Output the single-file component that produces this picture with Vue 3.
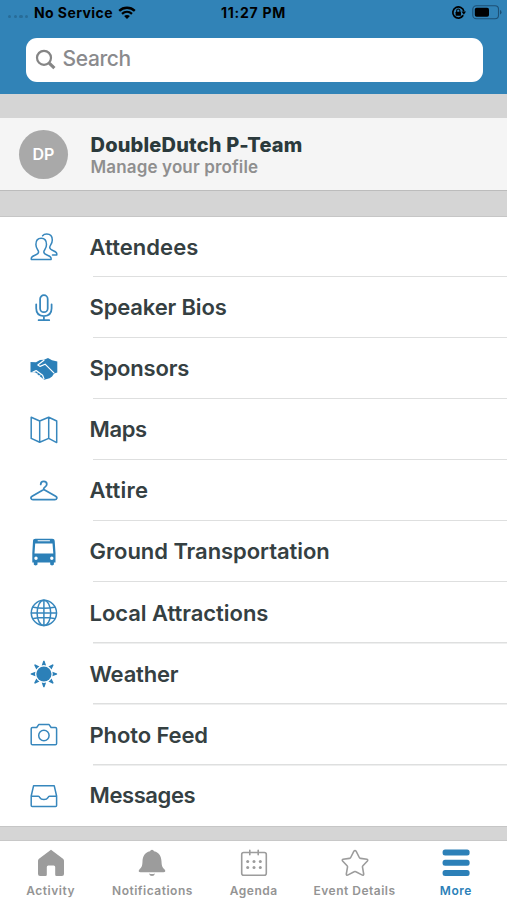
<script setup>
const items = [
  { id: 'attendees', label: 'Attendees', spacing: '0.05px' },
  { id: 'speakers', label: 'Speaker Bios', spacing: '-0.15px' },
  { id: 'sponsors', label: 'Sponsors', spacing: '-0.2px' },
  { id: 'maps', label: 'Maps', spacing: '-0.35px' },
  { id: 'attire', label: 'Attire', spacing: '0.25px' },
  { id: 'transport', label: 'Ground Transportation', spacing: '-0.06px' },
  { id: 'local', label: 'Local Attractions', spacing: '-0.04px' },
  { id: 'weather', label: 'Weather', spacing: '-0.2px' },
  { id: 'photo', label: 'Photo Feed', spacing: '-0.1px' },
  { id: 'messages', label: 'Messages', spacing: '-0.4px' }
]
const tabs = [
  { id: 'home', label: 'Activity' },
  { id: 'bell', label: 'Notifications' },
  { id: 'agenda', label: 'Agenda' },
  { id: 'star', label: 'Event Details' },
  { id: 'more', label: 'More', active: true }
]
const rays = [0, 45, 90, 135, 180, 225, 270, 315]
</script>

<template>
  <div class="screen">
    <header class="top">
      <div class="status">
        <div class="carrier">
          <span class="signal"><i v-for="n in 4" :key="n"></i></span>
          <span class="service">No Service</span>
          <svg class="wifi" viewBox="0 0 18 13">
            <path d="M1.2 4.8C5.6.7 12.4.7 16.8 4.8" fill="none" stroke="#000" stroke-width="2.4" />
            <path d="M4 7.8C7 5.2 11 5.2 14 7.8" fill="none" stroke="#000" stroke-width="2.3" />
            <path d="M6.1 10C7.6 8.5 10.4 8.5 11.9 10L9 13Z" />
          </svg>
        </div>
        <span class="time">11:27 PM</span>
        <div class="power">
          <svg class="lock" viewBox="0 0 14 14">
            <path d="M11.4 9.600A5.200 5.200 0 1 1 12 6" fill="none" stroke="#000" stroke-width="1.600" />
            <path d="M9.800 6H14L12 9Z" />
            <rect x="4.300" y="6.200" width="5" height="3.800" rx=".5" />
            <path d="M5.300 6.500V5.300a1.500 1.500 0 0 1 3 0v1.200" fill="none" stroke="#000" />
          </svg>
          <svg class="battery" viewBox="0 0 30 15">
            <rect x=".8" y=".8" width="25.700" height="12.900" rx="3.500" fill="none" stroke="#1d5075" stroke-width="1.100" />
            <rect x="2.800" y="2.800" width="14.200" height="9" rx="1.800" />
            <path d="M28 5v4.500q1.500-.5 1.500-2.200T28 5" fill="#1d5075" />
          </svg>
        </div>
      </div>
      <div class="search">
        <svg viewBox="0 0 22 22" fill="none" stroke="#858585">
          <circle cx="9" cy="8.800" r="7" stroke-width="2.200" />
          <path d="M14.200 14.100l5.200 5" stroke-width="3.200" />
        </svg>
        <span>Search</span>
      </div>
    </header>

    <section class="profile">
      <div class="avatar">DP</div>
      <div class="who">
        <div class="name">DoubleDutch P-Team</div>
        <div class="manage">Manage your profile</div>
      </div>
    </section>

    <ul class="menu">
      <li v-for="item in items" :key="item.id">
        <svg class="icon" viewBox="0 0 28 28">
          <g v-if="item.id === 'attendees'" class="line">
            <path d="M1.300 26.500v-1.200c0-3.500 7.300-2.700 7.300-6.300 0-2-2.700-3-2.700-7.400 0-4.200 2.100-6.300 5.300-6.300s5.300 2.100 5.300 6.300c0 4.400-2.700 5.400-2.700 7.400 0 3.600 7.300 2.800 7.300 6.300v1.200z" />
            <path d="M12.600 2.800c.9-1.100 2.400-1.700 4.100-1.700 3.400 0 5.600 2.100 5.600 5.900 0 4.100-2.600 5.200-2.600 7.500 0 3.500 7.100 2.900 7.100 6.200V22h-4.300" />
          </g>
          <g v-else-if="item.id === 'speakers'" class="line thick">
            <rect x="10.100" y="1.200" width="7.600" height="17" rx="3.800" />
            <path d="M6.200 10.300v4c0 5 3 7.700 7.700 7.700s7.700-2.700 7.700-7.700v-4M13.900 22v4.200M8.600 26.200h10.600" />
          </g>
          <g v-else-if="item.id === 'sponsors'">
            <path d="M.5 7.100 6 7.200 10 5l4-.2L18 3l4 2.200 5.300 1.300v11l-3.200.9-2 3-2.500 1.800-5.500 1.600-2-1.700-2-1.500-5-4.300H.5z" />
            <path class="gap" d="M14.300 5.100 7.800 10l2.300 1.400 5-2.200 9 9M2.500 17.300l3.600-1.700 6.500 4.600 1.500 4" />
            <path class="gap fine" d="M5.400 20l2.400-2.400M8.200 22.200l2.400-2.600" />
          </g>
          <g v-else-if="item.id === 'maps'" class="line">
            <path d="M1.200 1.200 9.700 5l9-3.800L26.700 5v21.600l-8-4.200-9 3.900-8.500-3.900zM9.700 5v21.300M18.700 1.200v21.200" />
          </g>
          <g v-else-if="item.id === 'attire'" class="line thick">
            <path d="M10.700 7.400c0-2 1.200-3 3-3 2.100 0 3.100 1.300 3.100 2.900 0 2.800-3.300 2.300-3.300 5.100M13.800 12.500l11.900 6.700c1.900 1.100 1.300 3.500-.9 3.500H3c-2.200 0-2.800-2.400-.9-3.500z" />
          </g>
          <g v-else-if="item.id === 'transport'">
            <path fill-rule="evenodd" d="M5.500.8h16.700c1.700 0 2.300.8 2.500 2.200L25.500 15v9.500h-1.600v1.800c0 1.500-3.700 1.500-3.700 0v-1.800H7.500v1.800c0 1.500-3.700 1.500-3.700 0v-1.800H2.300V15L3 3C3.100 1.600 3.800.8 5.500.8ZM7.700 2.300v1h12.200v-1ZM5.200 5.600 4.500 15.500h18.800L22.500 5.600ZM6 18.500a1.700 1.700 0 1 0 0 3.400 1.700 1.700 0 0 0 0-3.400m15.800 0a1.700 1.700 0 1 0 0 3.400 1.700 1.700 0 0 0 0-3.400" />
          </g>
          <g v-else-if="item.id === 'local'" class="line">
            <circle cx="13.900" cy="13.900" r="12.600" />
            <ellipse cx="13.900" cy="13.900" rx="6.800" ry="12.600" />
            <path d="M13.900 1.300v25.200M1.300 13.900h25.200M3.400 8.300q10.500 2 21 0M3.400 19.500q10.500-2 21 0" />
          </g>
          <g v-else-if="item.id === 'weather'">
            <circle cx="13.900" cy="14" r="7.600" />
            <path v-for="r in rays" :key="r" d="M11.700 5.500 13.300.8h1.200l1.600 4.700-2.200-.4z" :transform="`rotate(${r} 13.900 14)`" />
          </g>
          <g v-else-if="item.id === 'photo'" class="line">
            <path d="M2.500 6.500h4.200l2-2.900h10.400l2 2.900h4.200q1.300 0 1.300 1.300v14.700q0 1.300-1.300 1.300H2.500q-1.300 0-1.300-1.300V7.800q0-1.300 1.300-1.300z" />
            <circle cx="13.900" cy="14.500" r="5.200" />
          </g>
          <g v-else class="line">
            <path d="M1.200 14 3.600 3.700h20.600L26.600 14v9.500q0 1-1 1H2.200q-1 0-1-1zM1.200 14.300h7.100q1.100 0 1.500 1.300 1.100 2 4.100 2t4.100-2q.4-1.300 1.500-1.300h7.100" />
          </g>
        </svg>
        <span class="label" :style="{ letterSpacing: item.spacing }">{{ item.label }}</span>
      </li>
    </ul>

    <nav class="tabs">
      <div v-for="tab in tabs" :key="tab.id" :class="['tab', tab.id, { active: tab.active }]">
        <svg viewBox="0 0 28 28">
          <path v-if="tab.id === 'home'" d="M14 .8 26 9.800q1 .8 1 2V25q0 2-2 2h-5.500q-1.300 0-1.300-1.300V18q0-1.500-1.500-1.500h-5.400q-1.500 0-1.500 1.500v7.700q0 1.300-1.300 1.300H3q-2 0-2-2V11.800q0-1.200 1-2z" />
          <g v-else-if="tab.id === 'bell'">
            <path d="M14 .7q1.500 0 2 1.600c5.500 1.300 7.300 5.500 7.500 10.200.2 5.500 1.200 6 3.100 8 1.300 1.500.7 2.700-1.100 2.700h-23c-1.800 0-2.400-1.200-1.100-2.700 1.900-2 2.900-2.500 3.100-8C4.700 7.800 6.500 3.600 12 2.300q.5-1.600 2-1.600z" />
            <path d="M11 24.500q3 1 6 0-.6 2.500-3 2.500t-3-2.500" />
          </g>
          <g v-else-if="tab.id === 'agenda'">
            <path class="outline" d="M3.700 3.500h20.600q2 0 2 2v18.700q0 2-2 2H3.700q-2 0-2-2V5.500q0-2 2-2zM9.800 1.200v4.500M18.200 1.200v4.500" />
            <g v-for="y in [12.400, 18.400]" :key="y">
              <circle v-for="x in [7.700, 14, 20.300]" :key="x" :cx="x" :cy="y" r="1.500" />
            </g>
          </g>
          <path v-else-if="tab.id === 'star'" class="outline" d="M12.900 2.200q1.100-1.500 2.200 0l3.200 6.300q.4.800 1.300.9l6.300.9q1.400.5.500 1.700l-4.500 4.700q-.6.600-.4 1.500l1.200 6.800q0 1.500-1.400 1.100l-6.400-3.300q-.9-.5-1.800 0l-6.400 3.300q-1.400.4-1.400-1.100l1.200-6.800q.2-.9-.4-1.500L1.600 12q-.9-1.200.5-1.700l6.300-.9q.9-.1 1.300-.9z" />
          <g v-else>
            <rect x=".6" y=".6" width="27" height="6" rx="2.500" />
            <rect x=".6" y="10.800" width="27" height="6" rx="2.500" />
            <rect x=".6" y="21" width="27" height="6" rx="2.500" />
          </g>
        </svg>
        <span>{{ tab.label }}</span>
      </div>
    </nav>
  </div>
</template>

<style>
body { margin: 0; background: #d5d5d5; }
</style>

<style scoped>
.screen {
  width: 507px;
  height: 900px;
  overflow: hidden;
  display: flex;
  flex-direction: column;
  background: #d5d5d5;
  font-family: Inter, "Liberation Sans", sans-serif;
  white-space: nowrap;
}
.screen > * { flex-shrink: 0; }
svg { display: block; flex-shrink: 0; }
.top { height: 94px; background: #3183b7; }
.status {
  height: 25px;
  margin-bottom: 13px;
  display: grid;
  grid-template-columns: 1fr auto 1fr;
  align-items: center;
  font-size: 14px;
  line-height: 17px;
  font-weight: 700;
  color: #000;
}
.carrier { display: flex; align-items: center; padding-left: 8px; }
.signal { display: flex; gap: 2.500px; width: 26px; padding-top: 8px; }
.signal i { width: 3.200px; height: 3.200px; border-radius: 50%; background: #286c98; }
.service { letter-spacing: .42px; }
.time { letter-spacing: .75px; }
.wifi { width: 18px; height: 13px; margin-left: 5.500px; }
.power { display: flex; align-items: center; justify-content: flex-end; padding-right: 5px; }
.lock { width: 15px; height: 15px; margin-right: 6px; }
.battery { width: 30px; height: 15px; }
.search {
  height: 43.500px;
  margin: 0 24.500px 0 25.500px;
  border-radius: 11px;
  background: #fff;
  display: flex;
  align-items: center;
  padding-left: 9px;
  box-sizing: border-box;
  color: #8a8a8d;
  font-size: 21px;
  line-height: 26px;
  font-weight: 500;
  letter-spacing: -.35px;
}
.search span { padding-bottom: 1.500px; }
.search svg { width: 22px; height: 22px; margin-right: 6px; }
.profile {
  height: 73px;
  margin-top: 24px;
  margin-bottom: 25px;
  box-sizing: border-box;
  border-bottom: 1px solid #bcbcbc;
  background: #f5f5f5;
  display: flex;
  align-items: center;
  padding-left: 19px;
}
.avatar {
  width: 49px;
  height: 49px;
  border-radius: 50%;
  background: #a9a9a9;
  color: #fff;
  display: flex;
  align-items: center;
  justify-content: center;
  font-size: 16px;
  font-weight: 600;
  margin-right: 22.500px;
}
.who { padding-top: 2px; }
.name { font-size: 20px; line-height: 24px; font-weight: 800; color: #2b3a3c; letter-spacing: .18px; }
.manage { font-size: 17px; line-height: 21px; font-weight: 600; color: #8f8f8f; letter-spacing: .14px; }
.menu {
  height: 608.500px;
  margin: 0;
  padding: 0;
  list-style: none;
  background: #fff;
  border-top: 1px solid #c6c6c6;
  border-bottom: 1px solid #c6c6c6;
}
.menu li {
  height: 61.100px;
  box-sizing: border-box;
  display: flex;
  align-items: center;
  padding-left: 30.200px;
  background: linear-gradient(#dedfdf, #dedfdf) 92.500px 100% / 415px 1.500px no-repeat;
}
.menu li:first-child { height: 60px; }
.menu li:last-child { height: 60px; background: none; }
.icon { width: 28px; height: 28px; margin-right: 31.300px; fill: #2c80b8; }
.line { fill: none; stroke: #3787bd; stroke-width: 1.500; stroke-linejoin: round; stroke-linecap: round; }
.thick { stroke-width: 1.750; }
.gap { fill: none; stroke: #fff; stroke-width: 1.200; stroke-linejoin: round; }
.fine { stroke-width: .9; }
.label { font-size: 22px; line-height: 28px; font-weight: 600; color: #354042; padding-bottom: 1px; }
.tabs {
  height: 60px;
  margin-top: auto;
  background: #fff;
  border-top: 1px solid #c8c8c8;
  box-sizing: border-box;
  display: grid;
  grid-template-columns: repeat(5, 101.300px);
}
.tab {
  display: flex;
  flex-direction: column;
  align-items: center;
  padding-top: 8px;
  color: #949494;
  font-size: 12px;
  line-height: 16px;
  font-weight: 600;
  letter-spacing: .5px;
}
.tab svg { width: 28px; height: 28px; margin-bottom: 6px; fill: #9c9c9c; }
.bell { padding-left: 1px; }
.agenda { padding-left: 1px; }
.outline { fill: none; stroke: #9c9c9c; stroke-width: 1.600; stroke-linecap: round; }
.tab.active { color: #2c80b8; }
.active svg { fill: #2c80b8; }
</style>
